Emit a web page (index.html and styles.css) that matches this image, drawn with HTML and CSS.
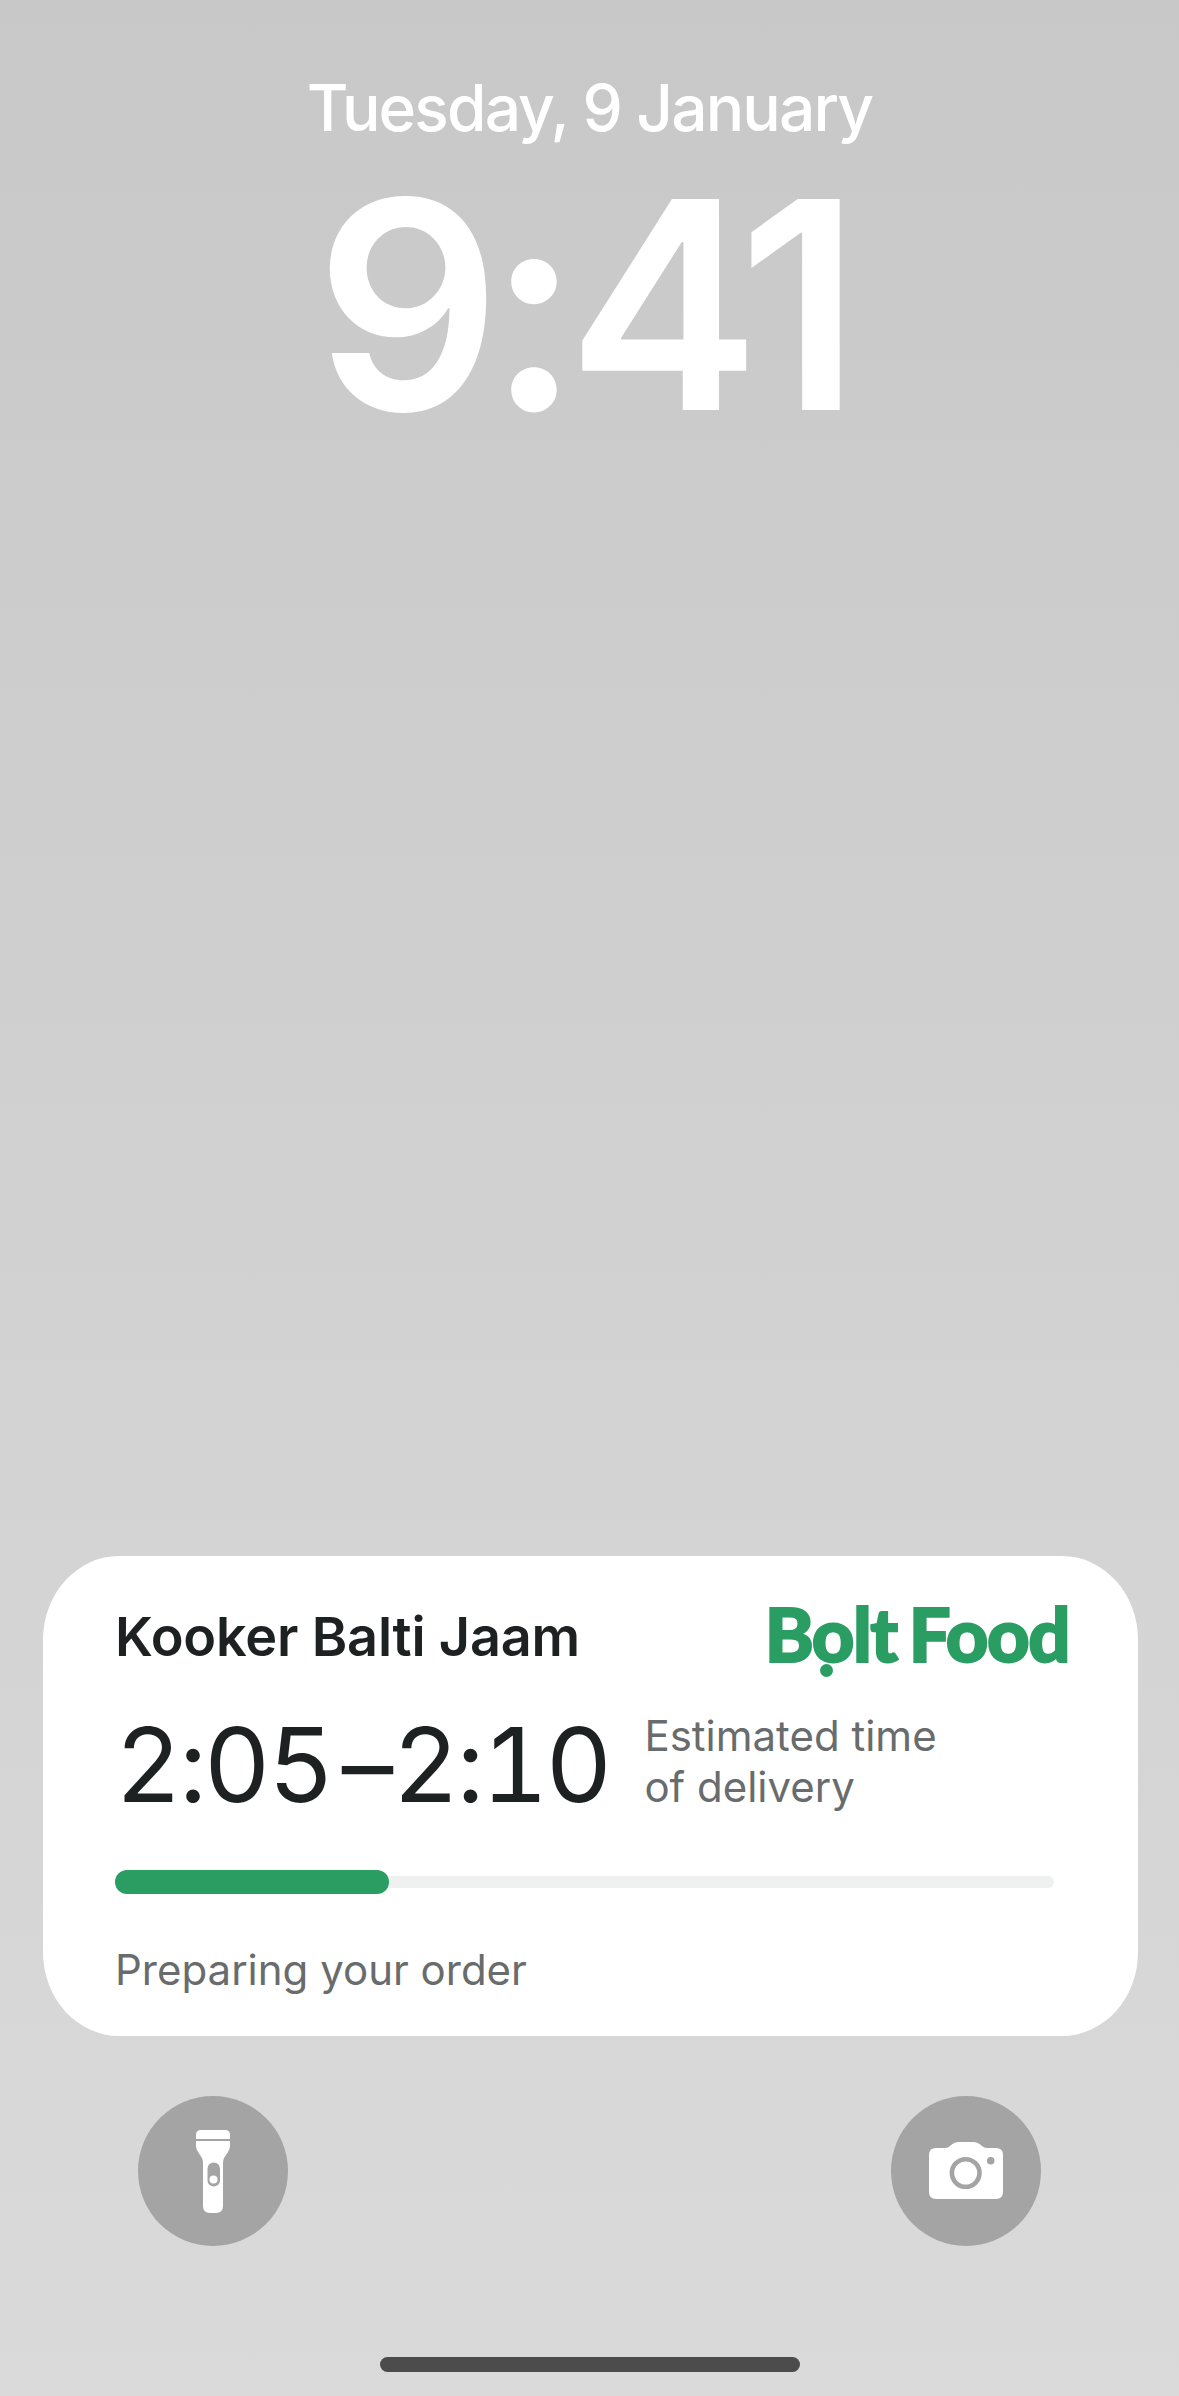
FILE: index.html
```html
<!DOCTYPE html>
<html lang="en">
<head>
    <meta charset="UTF-8">
    <meta name="viewport" content="width=device-width, initial-scale=1.0">
    <title>Lock screen</title>
    <link rel="stylesheet" href="styles.css">
</head>
<body>

<header class="lock-top">
    <div class="date">Tuesday, 9 January</div>
    <div class="clock">9:41</div>
</header>

<section class="card">
    <div class="card-head">
        <div class="place">Kooker Balti Jaam</div>
        <div class="logo">Bolt Food</div>
    </div>
    <div class="eta">
        <div class="eta-time">2:05<span class="dash">–</span>2:10</div>
        <div class="eta-label">Estimated time<br>of delivery</div>
    </div>
    <div class="progress">
        <div class="progress-fill"></div>
    </div>
    <div class="status">Preparing your order</div>
</section>

<div class="actions">
    <div class="round-btn">
        <svg viewBox="0 0 150 150" width="150" height="150">
            <path fill="#fff" d="M63 34H87Q92 34 92 39V43H58V39Q58 34 63 34Z"/>
            <path fill="#fff" d="M58 45H92V50Q92 53 90 56L86 62Q85 64 85 67V110Q85 117 78 117H72Q65 117 65 110V67Q65 64 64 62L60 56Q58 53 58 50Z"/>
            <rect x="69.5" y="66.5" width="12.5" height="24" rx="6.25" fill="#a4a4a4"/>
            <circle cx="75.5" cy="83.5" r="4" fill="#fff"/>
        </svg>
    </div>
    <div class="round-btn">
        <svg viewBox="0 0 150 150" width="150" height="150">
            <path fill="#fff" d="M45 52H54Q57 52 59 50Q63 46 68 46H82Q87 46 91 50Q93 52 96 52H105Q112 52 112 59V96Q112 103 105 103H45Q38 103 38 96V59Q38 52 45 52Z"/>
            <circle cx="74.7" cy="77" r="13.8" fill="none" stroke="#a4a4a4" stroke-width="4.6"/>
            <circle cx="99.7" cy="64.7" r="3.8" fill="#a4a4a4"/>
        </svg>
    </div>
</div>

<div class="home-bar"></div>

</body>
</html>
```

FILE: styles.css
```css
body {
    margin: 0;
    width: 1179px;
    height: 2396px;
    overflow: hidden;
    display: flex;
    flex-direction: column;
    background: linear-gradient(#c8c8c8, #dadada);
    font-family: Inter, "Liberation Sans", sans-serif;
}
.lock-top {
    padding-top: 69px;
    text-align: center;
    color: #fff;
}
.date {
    font-size: 64px;
    line-height: 78px;
    font-weight: 500;
    letter-spacing: -1.85px;
}
.clock {
    font-size: 290px;
    line-height: 300px;
    margin-top: 8px;
    padding-right: 16px;
    font-weight: 600;
    letter-spacing: -13px;
}
.card {
    margin: auto 41px 0 43px;
    padding: 48px 71px 0 72px;
    height: 432px;
    background: #fff;
    border-radius: 76px / 84px;
    color: #1d2121;
}
.card-head {
    display: flex;
    justify-content: space-between;
    align-items: center;
}
.place {
    font-size: 54px;
    line-height: 66px;
    font-weight: 600;
    letter-spacing: -0.2px;
}
.logo {
    position: relative;
    margin: -6px -2px 0 0;
    font-family: Lato, sans-serif;
    font-size: 74px;
    line-height: 66px;
    font-weight: 900;
    letter-spacing: -1.5px;
    word-spacing: -4px;
    -webkit-text-stroke: 2px #2a9d63;
    color: #2a9d63;
}
.logo::after {
    content: "";
    position: absolute;
    left: 55px;
    bottom: -10px;
    width: 13px;
    height: 13px;
    border-radius: 50%;
    background: #2a9d63;
}
.eta {
    display: flex;
    align-items: center;
    margin-top: 40px;
    gap: 35px;
}
.eta-time {
    font-size: 103px;
    line-height: 110px;
    font-weight: 400;
    letter-spacing: -2.8px;
    font-variant-numeric: tabular-nums;
}
.dash {
    margin: 0 2px 0 10px;
}
.eta-label,
.status {
    font-size: 42px;
    line-height: 51px;
    color: #686c6c;
}
.eta-label {
    margin-top: -8px;
}
.progress {
    position: relative;
    margin: 56px 13px 0 0;
    height: 12px;
    border-radius: 6px;
    background: #eef1f0;
}
.progress-fill {
    position: absolute;
    left: 0;
    top: -6px;
    width: 274px;
    height: 24px;
    border-radius: 12px;
    background: #2a9d63;
}
.status {
    margin-top: 56px;
}
.actions {
    display: flex;
    justify-content: space-between;
    margin: 60px 138px 0 138px;
}
.round-btn {
    width: 150px;
    height: 150px;
    border-radius: 50%;
    background: #a4a4a4;
}
.round-btn svg {
    display: block;
}
.home-bar {
    align-self: center;
    margin: 111px 0 24px;
    width: 420px;
    height: 15px;
    border-radius: 8px;
    background: #4c4c4c;
}
```
